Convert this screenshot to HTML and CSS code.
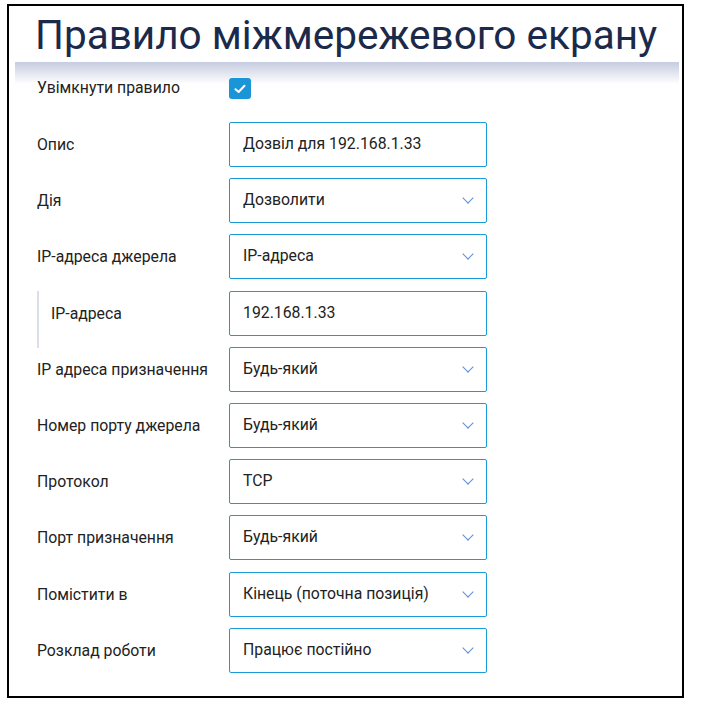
FILE: index.html
```html
<!DOCTYPE html>
<html lang="uk">
<head>
    <meta charset="UTF-8" />
    <meta name="viewport" content="width=device-width, initial-scale=1.0"/>
    <title>Правило міжмережевого екрану</title>
    <link rel="stylesheet" href="styles.css">
</head>
<body>
<div class="frame">
    <h1 class="title">Правило міжмережевого екрану</h1>
    <div class="band"></div>

    <form class="rule-form">
        <div class="row">
            <label class="label">Увімкнути правило</label>
            <span class="checkbox">
                <svg width="12" height="10" viewBox="0 0 12 10"><path d="M1.5 5.2 L4.6 8 L10.5 1.8" fill="none" stroke="#fff" stroke-width="2" stroke-linecap="round" stroke-linejoin="round"/></svg>
            </span>
        </div>

        <div class="row">
            <label class="label">Опис</label>
            <div class="field">Дозвіл для 192.168.1.33</div>
        </div>

        <div class="row">
            <label class="label">Дія</label>
            <div class="field select">Дозволити</div>
        </div>

        <div class="row">
            <label class="label">IP-адреса джерела</label>
            <div class="field select">IP-адреса</div>
        </div>

        <div class="row sub">
            <label class="label">IP-адреса</label>
            <div class="field">192.168.1.33</div>
        </div>

        <div class="row">
            <label class="label">IP адреса призначення</label>
            <div class="field select">Будь-який</div>
        </div>

        <div class="row">
            <label class="label">Номер порту джерела</label>
            <div class="field select">Будь-який</div>
        </div>

        <div class="row">
            <label class="label">Протокол</label>
            <div class="field select">TCP</div>
        </div>

        <div class="row">
            <label class="label">Порт призначення</label>
            <div class="field select">Будь-який</div>
        </div>

        <div class="row">
            <label class="label">Помістити в</label>
            <div class="field select">Кінець (поточна позиція)</div>
        </div>

        <div class="row">
            <label class="label">Розклад роботи</label>
            <div class="field select">Працює постійно</div>
        </div>
    </form>
</div>
</body>
</html>
```

FILE: styles.css
```css
body {
    margin: 0;
    padding: 0;
    background-color: #fff;
    font-family: Roboto, "Noto Sans", Arial, sans-serif;
    color: #222;
}

.frame {
    margin: 4px 0 0 7px;
    width: 664px;
    height: 690px;
    border: 2px solid #000;
    padding: 0 3px 0 6px;
}

.title {
    margin: 0;
    padding: 4px 0 0 20px;
    height: 52px;
    font-size: 40.5px;
    font-weight: 400;
    line-height: 50px;
    color: #1b2a4a;
    white-space: nowrap;
}

.band {
    height: 22px;
    background: linear-gradient(to bottom, #c6cce0, #fff);
}

.rule-form {
    margin-top: -18.25px;
    display: flex;
    flex-direction: column;
    gap: 12.25px;
}

.row {
    display: flex;
    align-items: center;
    height: 44px;
    padding-left: 22px;
}

.label {
    width: 192px;
    font-size: 15.8px;
}

.row.sub {
    margin-left: 22px;
    padding-left: 12px;
    border-left: 2px solid #d9dee7;
    height: 57px;
    align-items: flex-start;
    margin-bottom: -13px;
}

.row.sub .label {
    width: 178px;
    line-height: 45px;
}

.checkbox {
    width: 22px;
    height: 21px;
    margin-top: 2px;
    border-radius: 3px;
    background-color: #1a96d8;
    display: flex;
    align-items: center;
    justify-content: center;
}

.field {
    box-sizing: border-box;
    width: 258px;
    height: 45px;
    border: 1px solid #1a9ad6;
    border-radius: 2px;
    padding: 0 13px;
    font-size: 15.8px;
    line-height: 42px;
    color: #222;
    position: relative;
}

.select::after {
    content: "";
    position: absolute;
    right: 14px;
    top: 15px;
    width: 7px;
    height: 7px;
    border-right: 1.5px solid #5a8fd6;
    border-bottom: 1.5px solid #5a8fd6;
    transform: rotate(45deg);
}
```
